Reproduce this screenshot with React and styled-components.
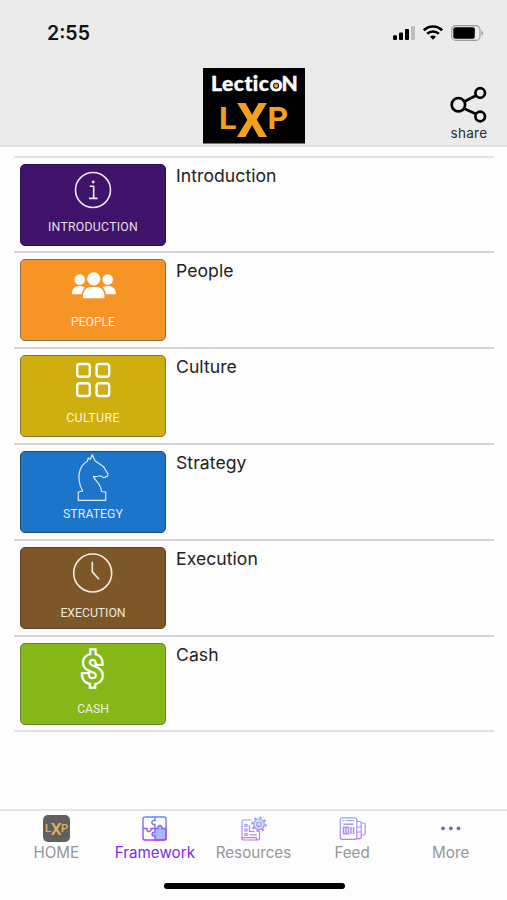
import React from "react";
import styled, { createGlobalStyle } from "styled-components";

const GlobalStyle = createGlobalStyle`
  body {
    margin: 0;
    background: #fdfdfd;
  }
  * {
    box-sizing: border-box;
  }
  svg {
    display: block;
    flex: none;
  }
`;

const Screen = styled.div`
  display: flex;
  flex-direction: column;
  width: 507px;
  height: 900px;
  overflow: hidden;
  background: #fdfdfd;
  font-family: Inter, "Liberation Sans", sans-serif;
`;

const Header = styled.header`
  height: 147px;
  background: #ebebeb;
  border-bottom: 2px solid #dfdfec;
`;

const StatusBar = styled.div`
  display: flex;
  justify-content: space-between;
  height: 68px;
  padding: 21px 23px 0 47px;
`;

const Time = styled.div`
  font-size: 19.5px;
  line-height: 25px;
  font-weight: 600;
  color: #111;
`;

const StatusIcons = styled.div`
  display: flex;
  gap: 8px;
  padding-top: 4px;
`;

const Brand = styled.div`
  display: grid;
  grid-template-columns: 1fr 102px 1fr;
  padding-left: 1px;
`;

const Share = styled.div`
  display: flex;
  flex-direction: column;
  align-items: center;
  justify-self: end;
  width: 40px;
  margin: 18px 18px 0 0;
  font-size: 13.5px;
  line-height: 18px;
  letter-spacing: 0.3px;
  color: #2c2c2c;
`;

const List = styled.main`
  flex: 1;
  margin: 9px 13px 0 14px;
`;

const Row = styled.div`
  display: flex;
  gap: 10px;
  height: 96px;
  padding: 6px 0 0 6px;
  border-top: 2px solid #d6d6d8;

  &:first-child {
    height: 95px;
    border-top-color: #e3e3e5;
  }
  &:last-child {
    height: 97px;
    border-bottom: 2px solid #e0e0e2;
  }
`;

const Card = styled.div`
  display: flex;
  flex-direction: column;
  align-items: center;
  width: 146px;
  height: 82px;
  border: 1px solid ${(props) => props.$edge};
  border-radius: 5px;
  background: ${(props) => props.$color};
`;

const Caption = styled.div`
  margin-top: ${(props) => (props.$low ? 9 : 6)}px;
  font-family: Roboto, sans-serif;
  font-size: 12.3px;
  line-height: 15px;
  letter-spacing: ${(props) => props.$spacing || 0}px;
  color: rgba(255, 255, 255, 0.88);
`;

const Title = styled.div`
  padding-top: 1px;
  font-size: 17.6px;
  line-height: 22px;
  letter-spacing: 0.05px;
  color: #222;
`;

const TabBar = styled.nav`
  display: flex;
  height: 62px;
  padding: 4px 7px 0;
  border-top: 2px solid #e4e4f1;
`;

const Tab = styled.div`
  display: flex;
  flex: 1;
  flex-direction: column;
  align-items: center;
  font-size: 15.2px;
  line-height: 20px;
  color: ${(props) => (props.$active ? "#7b2be8" : "#969699")};

  svg {
    margin-bottom: 1px;
  }
`;

const HomeArea = styled.div`
  display: flex;
  justify-content: center;
  height: 29px;
  padding-top: 12px;
`;

const HomeBar = styled.div`
  width: 181px;
  height: 6px;
  margin-left: 1px;
  border-radius: 3px;
  background: #000;
`;

const Signal = () => (
  <svg width="22" height="16" viewBox="0 0 22 16">
    <rect x="0" y="10.3" width="4" height="4.7" rx="1" />
    <rect x="6" y="7.5" width="4" height="7.5" rx="1" />
    <rect x="12" y="4" width="4" height="11" rx="1" />
    <rect x="18" y="1" width="4" height="14" rx="1" fill="#bdbdbd" />
  </svg>
);

const Wifi = () => (
  <svg width="20" height="16" viewBox="0 0 20 16" fill="none" stroke="#000" strokeWidth="2.6">
    <path d="M.9 5.3C6 .2 14 .2 19.1 5.3" />
    <path d="M4.2 8.8c3.2-3.1 8.4-3.1 11.6 0" />
    <path d="M7 11.7c1.8-1.6 4.2-1.6 6 0l-3 3z" fill="#000" stroke="none" />
  </svg>
);

const Battery = () => (
  <svg width="33" height="17" viewBox="0 0 33 17">
    <rect x=".6" y=".6" width="28.4" height="14.8" rx="4.2" fill="none" stroke="#999" strokeWidth="1.1" />
    <rect x="2.3" y="2.3" width="21.5" height="11.4" rx="2" />
    <path d="M30.5 5.7c2.2.8 2.2 4 0 4.8z" fill="#999" />
  </svg>
);

const Logo = () => (
  <svg width="102" height="76" viewBox="0 0 102 76" overflow="visible">
    <rect width="102" height="75.5" fill="#000" />
    <text fontFamily="Lato, sans-serif" fontWeight="900" fontSize="21" fill="#fff" stroke="#fff" strokeWidth=".4">
      <tspan x="8" y="23" letterSpacing=".5">Lectic</tspan>
      <tspan x="66.9" y="23" strokeWidth="1">o</tspan>
      <tspan x="78.5" y="23">N</tspan>
    </text>
    <circle cx="73.1" cy="17.7" r="3" fill="#000" />
    <circle cx="73.1" cy="17.7" r="2.1" fill="#f3a11d" />
    <text fontFamily="Roboto, sans-serif" fontWeight="700" fontSize="32" fill="#f3a11d">
      <tspan x="16" y="60.5">L</tspan>
      <tspan x="33.5" y="68.5" fontSize="49">X</tspan>
      <tspan x="64.5" y="60.5">P</tspan>
    </text>
  </svg>
);

const ShareIcon = () => (
  <svg width="38" height="38" viewBox="0 0 38 38" fill="none" stroke="#000" strokeWidth="2.7">
    <circle cx="8.4" cy="18.7" r="6.7" />
    <circle cx="30.2" cy="7" r="4.8" />
    <circle cx="30.2" cy="30.5" r="4.8" />
    <path d="M14.5 15.5L26 9.5M14 22.5l12 5.4" />
  </svg>
);

const IconArt = styled.svg.attrs({ width: 60, height: 48, viewBox: "0 0 60 48" })`
  fill: none;
  stroke: #fff;
  stroke-linejoin: round;
  overflow: visible;
  margin-bottom: 1px;
`;

const InfoIcon = () => (
  <IconArt strokeWidth="1.6" opacity=".9">
    <circle cx="30" cy="25" r="17.5" />
    <circle cx="30.2" cy="17" r="1.4" fill="#fff" stroke="none" />
    <path d="M26.7 21.2h4V33.4M26 33.4h8.7" />
  </IconArt>
);

const PeopleIcon = () => (
  <IconArt>
    <g fill="#fff" stroke="none" transform="translate(0 .8)">
      <circle cx="16.7" cy="18.8" r="5.3" />
      <circle cx="44.7" cy="18.8" r="5.3" />
      <path d="M8.8 33.5c.2-5.5 2.8-8.2 7.9-8.2 2.3 0 4 .6 5.2 1.6-1.9 1.7-3 3.9-3.2 6.6z" />
      <path d="M53 33.5c-.2-5.5-3-8.2-8-8.2-2.3 0-4 .6-5.2 1.6 1.9 1.7 3 3.9 3.2 6.6z" />
      <circle cx="30.7" cy="18" r="7.6" fill="#f69426" />
      <circle cx="30.7" cy="18" r="6.6" />
      <path d="M20 37.5V35c0-5.4 3.5-8.8 8.2-8.8h5c4.7 0 8.2 3.4 8.2 8.8v2.5z" />
    </g>
  </IconArt>
);

const GridIcon = () => (
  <IconArt strokeWidth="2.4">
    <rect x="14.2" y="8" width="12.6" height="12.8" rx="2.6" />
    <rect x="33.6" y="8" width="12.6" height="12.8" rx="2.6" />
    <rect x="14.2" y="27.2" width="12.6" height="12.8" rx="2.6" />
    <rect x="33.6" y="27.2" width="12.6" height="12.8" rx="2.6" />
  </IconArt>
);

const KnightIcon = () => (
  <IconArt strokeWidth="1.2" opacity=".85">
    <path d="M29.3 2.7L32 8.7l8.3 5.7L45 22c.3 1.6-.7 2.5-2 2.7-1 1.2-2.6 1-3.3.4-1.3-1.5-3-1.6-4.7-.9-2 .7-3.2.6-4.7 0 1.7 5.3 7.6 7 8.2 15.3l4.2.5v8.3H15.3V40l4.4-1C15.7 32.5 15 24 17 18.3c1.3-4.2 4-7 7.3-9l1-3.3 1.9 1.3z" />
  </IconArt>
);

const ClockIcon = () => (
  <IconArt strokeWidth="1.6" opacity=".9">
    <circle cx="29.7" cy="25" r="19" />
    <path d="M29.3 13.7v10.2l6.7 7.4" />
  </IconArt>
);

const DollarSign = styled.text`
  font: 500 39px Roboto, sans-serif;
  text-anchor: middle;
  paint-order: stroke;
  fill: #85b817;
  stroke-width: 4.4px;
  stroke-linejoin: miter;
`;

const DollarIcon = () => (
  <IconArt>
    <DollarSign x="29.3" y="38.5">
      $
    </DollarSign>
  </IconArt>
);

const Gradient = ({ id }) => (
  <linearGradient id={id} x1="0" y1="0" x2="0" y2="26" gradientUnits="userSpaceOnUse">
    <stop offset="0" stopColor="#5a8df5" />
    <stop offset="1" stopColor="#b43df0" />
  </linearGradient>
);

const HomeIcon = () => (
  <svg width="27" height="27" viewBox="0 0 27 27">
    <rect width="27" height="27" rx="5" fill="#606060" />
    <text fontFamily="Roboto, sans-serif" fontWeight="500" fontSize="11" fill="#e3b458">
      <tspan x="2" y="17">L</tspan>
      <tspan x="7.7" y="19.5" fontSize="17">X</tspan>
      <tspan x="18" y="17">P</tspan>
    </text>
  </svg>
);

const PuzzleIcon = () => (
  <svg width="27" height="27" viewBox="0 0 27 27" fill="none" stroke="url(#puzzle)" strokeWidth="1.4">
    <Gradient id="puzzle" />
    <path
      d="M14 13.5h3c-1-4 4.5-4 4 0h4V23q0 2-2 2h-9v-4c-4 1-4-4.5 0-4z"
      fill="#a8b8fb"
    />
    <rect x="2" y="2" width="23" height="23" rx="2" />
    <path d="M14 2v3.5c-4-1-4.5 4.5 0 4v4M2 13.5h4c-1 4 4.5 4 4 0h4" />
  </svg>
);

const ResourcesIcon = () => (
  <svg width="27" height="27" viewBox="0 0 27 27" fill="none" stroke="url(#resources)" strokeWidth="1.2" opacity=".7">
    <Gradient id="resources" />
    <path d="M12 5H3.8Q2 5 2 6.8v15.4M19.5 16v7q0 2-2 2H3.5q-1.7 0-1.7-2.3h14.5q0 2.3 1.5 2.3" />
    <path d="M5 9.5h2v2H5zM5 14h2v2H5zM5 18.5h2v2H5zM9.5 10v6.5h5M9.5 19.8h7" />
    <circle cx="19" cy="9.3" r="5.3" fill="#c8d5fc" />
    <circle cx="19" cy="9.3" r="2.3" />
    <circle cx="19" cy="9.3" r="6.7" strokeWidth="2" strokeDasharray="2.4 2.86" />
  </svg>
);

const FeedIcon = () => (
  <svg width="27" height="27" viewBox="0 0 27 27" fill="none" stroke="url(#feed)" strokeWidth="1.2" opacity=".7">
    <Gradient id="feed" />
    <rect x="1.3" y="2.8" width="16.5" height="21.5" rx="2" />
    <path d="M3.5 5.5h2M7 5.5h8" />
    <path d="M4.5 9.3h10M4.5 12.3h5v6.5h-5zM7 12.3v6.5M12 12v7M14.5 12v7" strokeWidth="1.5" />
    <path d="M17.8 6.5h2.7q1.7 0 1.7 1.7v13.5q0 2-2 2h-3M22.2 8h2.3q1.7 0 1.7 1.5v9q0 1.5-1.5 1.5h-2.5M18 12h4M18 17h4" />
  </svg>
);

const MoreIcon = () => (
  <svg width="27" height="27" viewBox="0 0 27 27" fill="#7b62dc">
    <circle cx="6" cy="13.4" r="1.9" />
    <circle cx="13.8" cy="13.4" r="1.9" />
    <circle cx="21.5" cy="13.4" r="1.9" />
  </svg>
);

const topics = [
  { title: "Introduction", color: "#3f126b", edge: "#2a104c", Icon: InfoIcon, spacing: 0.25 },
  { title: "People", color: "#f69426", edge: "#8a7045", Icon: PeopleIcon, spacing: -0.1 },
  { title: "Culture", color: "#cfae10", edge: "#83763a", Icon: GridIcon, spacing: 0.4 },
  { title: "Strategy", color: "#1c75c8", edge: "#24496f", Icon: KnightIcon, spacing: 0.05 },
  { title: "Execution", color: "#7e5728", edge: "#57432d", Icon: ClockIcon, spacing: -0.05, low: true },
  { title: "Cash", color: "#85b817", edge: "#68803a", Icon: DollarIcon, spacing: -0.15, low: true },
];

const tabs = [
  { label: "HOME", Icon: HomeIcon },
  { label: "Framework", Icon: PuzzleIcon, active: true },
  { label: "Resources", Icon: ResourcesIcon },
  { label: "Feed", Icon: FeedIcon },
  { label: "More", Icon: MoreIcon },
];

function App() {
  return (
    <Screen>
      <GlobalStyle />
      <Header>
        <StatusBar>
          <Time>2:55</Time>
          <StatusIcons>
            <Signal />
            <Wifi />
            <Battery />
          </StatusIcons>
        </StatusBar>
        <Brand>
          <span />
          <Logo />
          <Share>
            <ShareIcon />
            share
          </Share>
        </Brand>
      </Header>
      <List>
        {topics.map(({ title, color, edge, Icon, spacing, low }) => (
          <Row key={title}>
            <Card $color={color} $edge={edge}>
              <Icon />
              <Caption $spacing={spacing} $low={low}>
                {title.toUpperCase()}
              </Caption>
            </Card>
            <Title>{title}</Title>
          </Row>
        ))}
      </List>
      <TabBar>
        {tabs.map(({ label, Icon, active }) => (
          <Tab key={label} $active={active}>
            <Icon />
            {label}
          </Tab>
        ))}
      </TabBar>
      <HomeArea>
        <HomeBar />
      </HomeArea>
    </Screen>
  );
}

export default App;
